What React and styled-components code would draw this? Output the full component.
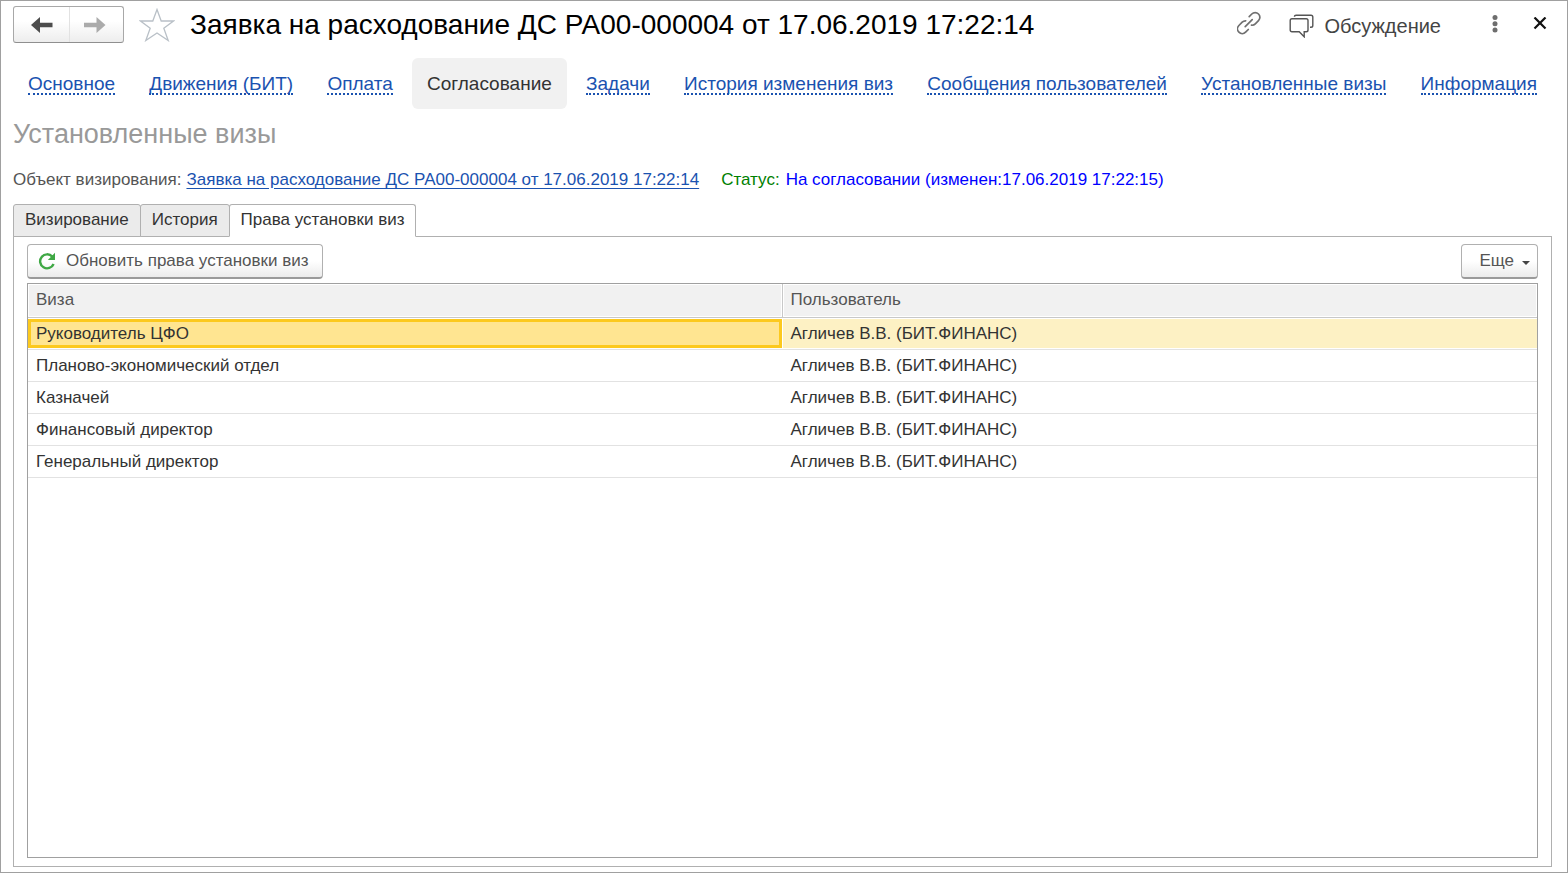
import { useState } from "react";
import styled, { createGlobalStyle } from "styled-components";

const sections = [
  "Основное",
  "Движения (БИТ)",
  "Оплата",
  "Согласование",
  "Задачи",
  "История изменения виз",
  "Сообщения пользователей",
  "Установленные визы",
  "Информация",
];

const tabs = ["Визирование", "История", "Права установки виз"];

const rows = [
  { visa: "Руководитель ЦФО", user: "Агличев В.В. (БИТ.ФИНАНС)" },
  { visa: "Планово-экономический отдел", user: "Агличев В.В. (БИТ.ФИНАНС)" },
  { visa: "Казначей", user: "Агличев В.В. (БИТ.ФИНАНС)" },
  { visa: "Финансовый директор", user: "Агличев В.В. (БИТ.ФИНАНС)" },
  { visa: "Генеральный директор", user: "Агличев В.В. (БИТ.ФИНАНС)" },
];

const App = () => {
  const [section, setSection] = useState("Согласование");
  const [tab, setTab] = useState("Права установки виз");
  const [selected, setSelected] = useState(0);

  return (
    <>
      <GlobalStyle />
      <Window>
        <Header>
          <History>
            <HistoryButton aria-label="Назад">
              <svg width="22" height="16" viewBox="0 0 22 16">
                <path d="M0 8L9 0V5.8H21.500V10.200H9V16Z" fill="#4d4d4d" />
              </svg>
            </HistoryButton>
            <HistoryButton aria-label="Вперед">
              <svg width="22" height="16" viewBox="0 0 22 16">
                <path d="M21.500 8L12.500 0V5.800H0V10.200H12.500V16Z" fill="#ababab" />
              </svg>
            </HistoryButton>
          </History>
          <IconButton $width={36} aria-label="В избранное">
            <svg width="36" height="34" viewBox="0 0 36 34">
              <path
                d="M18 1.500L22.200 13H34.500L24.800 20.200L29.200 32.500L18 25L6.800 32.500L11.200 20.200L1.500 13H13.800Z"
                fill="#fff"
                stroke="#b9c0c7"
                strokeWidth="1.300"
              />
            </svg>
          </IconButton>
          <Title>Заявка на расходование ДС РА00-000004 от 17.06.2019 17:22:14</Title>
          <Actions>
            <IconButton $width={26} aria-label="Получить ссылку">
              <svg width="26" height="28" viewBox="0 0 26 28" fill="none" stroke="#707070" strokeWidth="1.700" strokeLinecap="round">
                <path d="M12.200 5.600L14.800 3A4.700 4.700 0 0 1 21.500 9.700L18.300 12.900A4.600 4.600 0 0 1 14.500 14.200" />
                <path d="M8.700 9.800A4.600 4.600 0 0 0 5.200 11.200L1.900 14.500A4.700 4.700 0 0 0 8.600 21.200L11.300 18.500" />
                <path d="M8.200 15.700L15.200 8.700" />
              </svg>
            </IconButton>
            <Discussion>
              <svg width="26" height="24" viewBox="0 0 26 24" fill="none" stroke="#555" strokeWidth="1.400">
                <path d="M5.500 2.700V2.500Q5.500 1.200 7 1.200H22Q23.800 1.200 23.800 3V11.500Q23.800 13.300 22 13.300H21" />
                <path d="M3 4.700H17.200Q19 4.700 19 6.500V16Q19 17.800 17.200 17.800H15.200V22.800L10.200 17.800H3Q1.200 17.800 1.200 16V6.500Q1.200 4.700 3 4.700Z" />
              </svg>
              Обсуждение
            </Discussion>
            <IconButton $width={24} aria-label="Дополнительно">
              <svg width="6" height="20" viewBox="0 0 6 20" fill="#6e6e6e">
                <circle cx="3" cy="2.500" r="2.500" />
                <circle cx="3" cy="8.700" r="2.500" />
                <circle cx="3" cy="15" r="2.500" />
              </svg>
            </IconButton>
            <IconButton $width={24} aria-label="Закрыть">
              <svg width="14" height="16" viewBox="0 0 14 16" stroke="#111" strokeWidth="2.200">
                <path d="M1.500 0.500L12.500 11.500M12.500 0.500L1.500 11.500" />
              </svg>
            </IconButton>
          </Actions>
        </Header>

        <Nav>
          {sections.map((name) => (
            <NavItem
              key={name}
              href="#"
              $active={name === section}
              onClick={() => setSection(name)}
            >
              <span>{name}</span>
            </NavItem>
          ))}
        </Nav>

        <Subtitle>Установленные визы</Subtitle>

        <Info>
          <InfoLabel>Объект визирования:</InfoLabel>
          <ObjectLink href="#">
            Заявка на расходование ДС РА00-000004 от 17.06.2019 17:22:14
          </ObjectLink>
          <StatusLabel>Статус:</StatusLabel>
          <Status>На согласовании (изменен:17.06.2019 17:22:15)</Status>
        </Info>

        <Tabs role="tablist">
          {tabs.map((name) => (
            <Tab
              key={name}
              role="tab"
              aria-selected={name === tab}
              $active={name === tab}
              onClick={() => setTab(name)}
            >
              {name}
            </Tab>
          ))}
        </Tabs>

        <Panel>
          <Toolbar>
            <Button>
              <svg width="18" height="18" viewBox="0 0 18 18">
                <path d="M14.300 4.600A7 7 0 1 0 15.600 12" fill="none" stroke="#3fa845" strokeWidth="2.400" />
                <path d="M17 0.800V8H9.800Z" fill="#3fa845" />
              </svg>
              Обновить права установки виз
            </Button>
            <MoreButton>
              Еще
              <svg width="8" height="8" viewBox="0 0 8 8">
                <path d="M0 4H8L4 8Z" fill="#444" />
              </svg>
            </MoreButton>
          </Toolbar>
          <TableBox>
            <Table>
              <thead>
                <tr>
                  <HeadCell>
                    <HeadFill>Виза</HeadFill>
                  </HeadCell>
                  <HeadCell>
                    <HeadFill>Пользователь</HeadFill>
                  </HeadCell>
                </tr>
              </thead>
              <tbody>
                {rows.map(({ visa, user }, i) => (
                  <tr key={visa} onClick={() => setSelected(i)}>
                    <Cell>
                      <CellFill $selected={i === selected} $focused={i === selected}>
                        {visa}
                      </CellFill>
                    </Cell>
                    <Cell>
                      <CellFill $selected={i === selected}>{user}</CellFill>
                    </Cell>
                  </tr>
                ))}
              </tbody>
            </Table>
          </TableBox>
        </Panel>
      </Window>
    </>
  );
};
export default App;

const GlobalStyle = createGlobalStyle`
  * {
    box-sizing: border-box;
  }

  body {
    margin: 0;
    background-color: #fff;
  }

  body, button {
    font-family: "Liberation Sans", Arial, sans-serif;
    font-size: 17px;
    line-height: 20px;
  }

  button {
    cursor: pointer;
  }

  svg {
    display: block;
    flex-shrink: 0;
  }
`;

const Window = styled.div`
  display: flex;
  flex-direction: column;
  min-height: 100vh;
  padding: 0 15px 5px 12px;
  border: 1px solid #a0a0a0;
  color: #333;
  white-space: nowrap;
`;

const Header = styled.header`
  display: flex;
  align-items: center;
  height: 47px;
  margin-bottom: 10px;
`;

const History = styled.div`
  display: flex;
  height: 37px;
  margin-right: 15px;
  border: 1px solid #a8a8a8;
  border-bottom-color: #8f8f8f;
  border-radius: 3px;
  background: linear-gradient(#fff 40%, #ededed);
`;

const HistoryButton = styled.button`
  display: grid;
  place-items: center;
  width: 55px;
  padding: 0;
  border: none;
  background: none;

  & + & {
    width: 54px;
    padding-right: 4px;
    border-left: 1px solid #e2e2e2;
  }
`;

const IconButton = styled.button`
  display: grid;
  place-items: center;
  width: ${({ $width }) => $width}px;
  height: 36px;
  padding: 0;
  border: none;
  background: none;
`;

const Title = styled.h1`
  margin: 0 auto 0 15px;
  color: #000;
  font-size: 28px;
  font-weight: normal;
  line-height: 32px;
`;

const Actions = styled.div`
  display: flex;
  align-items: center;
`;

const Discussion = styled.button`
  display: flex;
  align-items: center;
  gap: 9px;
  margin: 0 42px 0 26px;
  padding: 2px 0 0;
  border: none;
  background: none;
  color: #444;
  font-size: 20px;
  line-height: 24px;

  & + button {
    margin-right: 21px;
  }
`;

const Nav = styled.nav`
  display: flex;
  justify-content: space-between;
`;

const NavItem = styled.a`
  flex-shrink: 0;
  padding: 15px 15px 14px;
  border-radius: 6px;
  background-color: ${({ $active }) => ($active ? "#f1f1f1" : "transparent")};
  color: ${({ $active }) => ($active ? "#333" : "#1a52b0")};
  font-size: 19px;
  line-height: 22px;
  text-decoration: none;

  span {
    display: block;
    height: 22px;
    border-bottom: ${({ $active }) => ($active ? "none" : "2px dotted")};
  }
`;

const Subtitle = styled.h2`
  margin: 9px 0 0;
  color: #999;
  font-size: 27px;
  font-weight: normal;
  line-height: 32px;
`;

const Info = styled.div`
  display: flex;
  margin: 20px 0 14px;
`;

const InfoLabel = styled.span`
  margin-right: 5px;
  color: #555;
`;

const ObjectLink = styled.a`
  margin-right: 22px;
  color: #1a52b0;
  text-underline-offset: 3px;
`;

const StatusLabel = styled.span`
  margin-right: 6px;
  color: #008000;
`;

const Status = styled.span`
  color: #0000ff;
`;

const Tabs = styled.div`
  position: relative;
  z-index: 1;
  display: flex;
  margin-bottom: -1px;
`;

const Tab = styled.button`
  height: 33px;
  padding: 0 11px 2px;
  border: 1px solid #b0b0b0;
  border-bottom-color: ${({ $active }) => ($active ? "#fff" : "#b0b0b0")};
  border-radius: 3px 3px 0 0;
  background-color: ${({ $active }) => ($active ? "#fff" : "#ebebeb")};
  color: #333;

  & + & {
    margin-left: -1px;
  }
`;

const Panel = styled.section`
  display: flex;
  flex-direction: column;
  flex: 1;
  padding: 7px 13px 8px;
  border: 1px solid #b0b0b0;
`;

const Toolbar = styled.div`
  display: flex;
  justify-content: space-between;
  margin-bottom: 4px;
`;

const Button = styled.button`
  display: flex;
  align-items: center;
  gap: 10px;
  height: 35px;
  padding: 0 13px 1px 10px;
  border: 1px solid #b0b0b0;
  border-bottom: 2px solid #9a9a9a;
  border-radius: 4px;
  background: linear-gradient(#fff 50%, #ebebeb);
  color: #555;
`;

const MoreButton = styled(Button)`
  gap: 8px;
  padding: 0 7px 1px 17px;
`;

const TableBox = styled.div`
  flex: 1;
  border: 1px solid #a0a0a0;
`;

const Table = styled.table`
  width: 100%;
  table-layout: fixed;
  border-spacing: 0;
`;

const HeadCell = styled.th`
  padding: 1px;
  border-bottom: 1px solid #c8c8c8;
  text-align: left;
  font-weight: normal;

  &:not(:last-child) {
    border-right: 1px solid #c8c8c8;
  }
`;

const HeadFill = styled.div`
  height: 31px;
  padding: 5px 7px;
  background-color: #f1f1f1;
  color: #555;
`;

const Cell = styled.td`
  padding: 1px 0;
  border-bottom: 1px solid #e2e2e2;

  &:not(:last-child) {
    padding-right: 1px;
  }
`;

const CellFill = styled.div`
  height: 29px;
  padding: ${({ $focused }) => ($focused ? "2px 5px" : "5px 8px")};
  border: ${({ $focused }) => ($focused ? "3px solid #fcc91e" : "none")};
  background-color: ${({ $selected, $focused }) =>
    $focused ? "#ffe591" : $selected ? "#fdf1c4" : "transparent"};
`;
